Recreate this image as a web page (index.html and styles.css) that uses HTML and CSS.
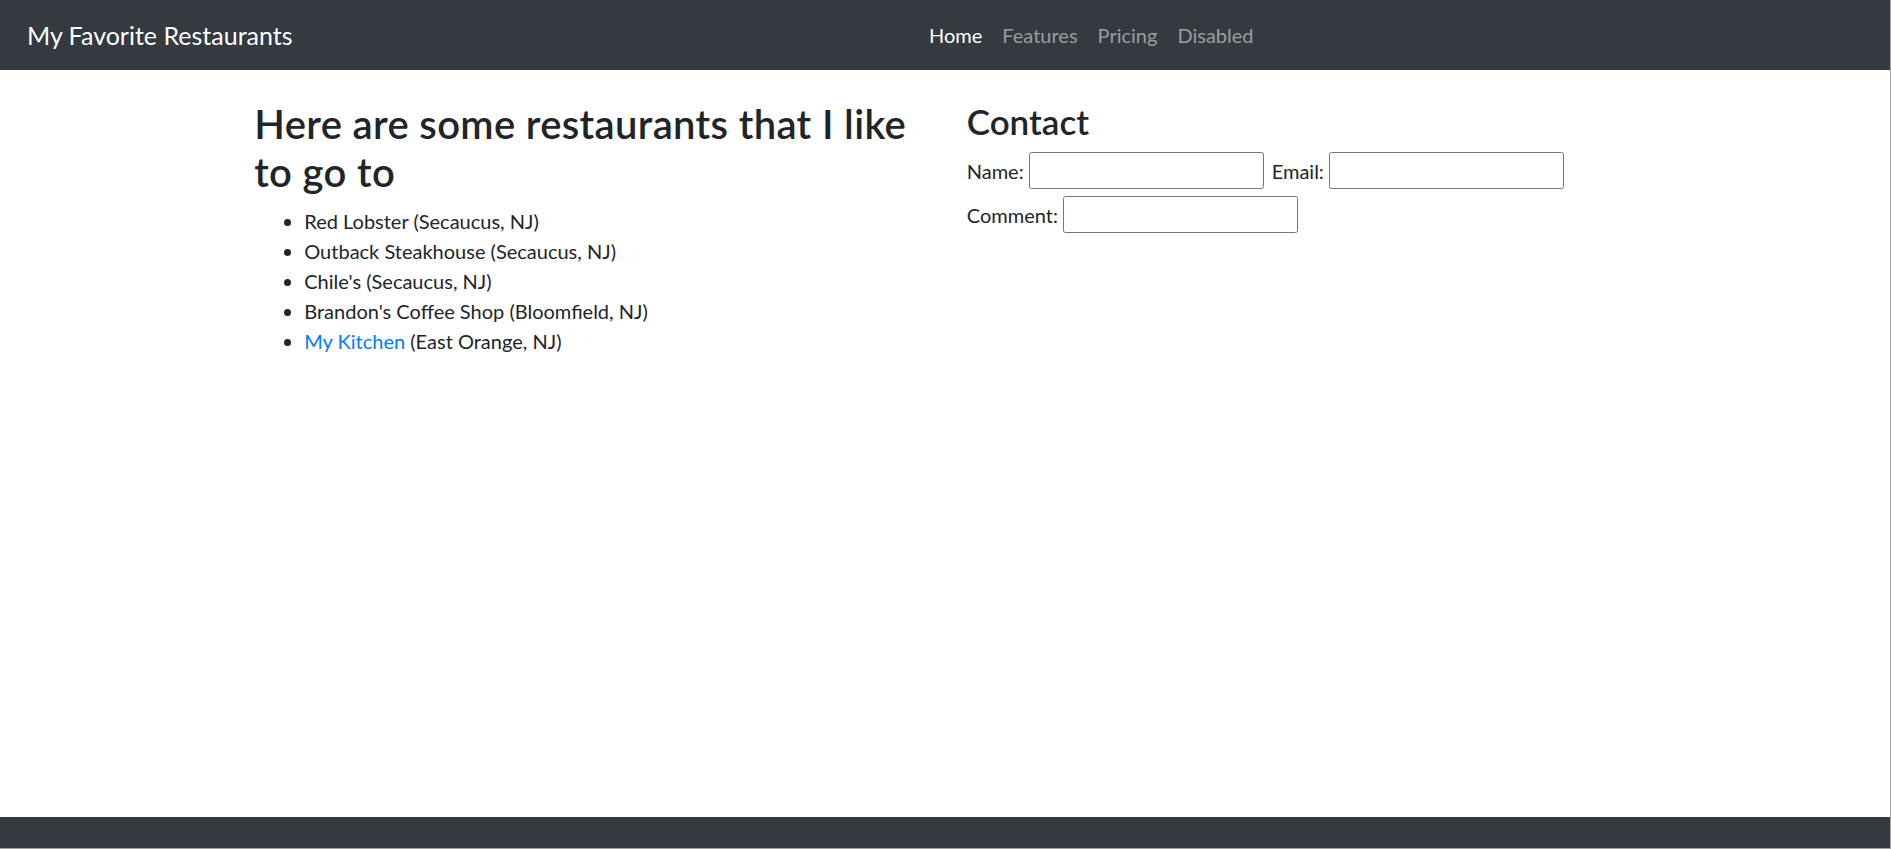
FILE: index.html
```html
<!DOCTYPE html>
<html lang="en">
<head>
<meta charset="utf-8">
<title>My Favorite Restaurants</title>
<link rel="stylesheet" href="styles.css">
</head>
<body>
<div class="page">
  <nav class="navbar">
    <a class="brand" href="#">My Favorite Restaurants</a>
    <div class="nav-collapse">
      <ul class="nav">
        <li><a class="nav-link active" href="#">Home</a></li>
        <li><a class="nav-link" href="#">Features</a></li>
        <li><a class="nav-link" href="#">Pricing</a></li>
        <li><a class="nav-link" href="#">Disabled</a></li>
      </ul>
    </div>
  </nav>
  <main class="container">
    <div class="row">
      <section class="col">
        <h2 class="title">Here are some restaurants that I like to go to</h2>
        <ul class="list">
          <li>Red Lobster (Secaucus, NJ)</li>
          <li>Outback Steakhouse (Secaucus, NJ)</li>
          <li>Chile's (Secaucus, NJ)</li>
          <li>Brandon's Coffee Shop (Bloomfield, NJ)</li>
          <li><a class="link" href="#">My Kitchen</a> (East Orange, NJ)</li>
        </ul>
      </section>
      <section class="col">
        <h3 class="subtitle">Contact</h3>
        <form class="form">
          <div class="form-row">
            <label class="label" for="name">Name:</label>
            <input class="input" type="text" id="name">
            <label class="label" for="email">Email:</label>
            <input class="input" type="text" id="email">
          </div>
          <div class="form-row">
            <label class="label" for="comment">Comment:</label>
            <input class="input" type="text" id="comment">
          </div>
        </form>
      </section>
    </div>
  </main>
  <footer class="footer"></footer>
</div>
</body>
</html>
```

FILE: styles.css
```css
* { box-sizing: border-box; }

html, body {
  margin: 0;
  padding: 0;
}

body {
  font-family: Lato, "Open Sans", "Liberation Sans", sans-serif;
  font-size: 20px;
  line-height: 30px;
  color: #212529;
  background: #fff;
}

.page {
  min-height: 849px;
  display: flex;
  flex-direction: column;
  border-right: 1px solid #a0a0a0;
  border-bottom: 1px solid #a0a0a0;
}

.navbar {
  height: 70px;
  background: #343a40;
  display: flex;
  align-items: center;
  padding: 0 20px 0 27px;
  flex-shrink: 0;
}

.brand {
  color: #fff;
  text-decoration: none;
  font-size: 25px;
  line-height: 37px;
  white-space: nowrap;
  margin-right: 20px;
}

.nav-collapse {
  flex: 1;
  display: flex;
  justify-content: center;
}

.nav {
  display: flex;
  list-style: none;
  margin: 0;
  padding: 0;
}

.nav-link {
  display: block;
  padding: 0 10px;
  color: rgba(255, 255, 255, 0.5);
  text-decoration: none;
  font-size: 20px;
  line-height: 30px;
}

.nav-link.active {
  color: #fff;
}

.container {
  width: 1425px;
  margin: 30px auto 0;
  padding: 0 15.75px 0 21.75px;
}

.row {
  display: grid;
  grid-template-columns: 1fr 1fr;
  column-gap: 37.5px;
}

.title {
  margin: 0 0 10px;
  font-size: 40px;
  line-height: 48px;
  font-weight: 600;
  letter-spacing: 0.35px;
}

.subtitle {
  margin: 0 0 10px;
  font-size: 35px;
  line-height: 42px;
  font-weight: 600;
}

.list {
  margin: 0 0 20px;
  padding-left: 50px;
}

.link {
  color: #007bff;
  text-decoration: none;
}

.form {
  display: flex;
  flex-direction: column;
  gap: 7px;
}

.form-row {
  display: flex;
  align-items: center;
}

.label {
  margin-right: 5px;
}

.input {
  width: 235px;
  height: 37px;
  border: 1px solid #767676;
  border-radius: 2.5px;
  margin-right: 8px;
  padding: 1px 2px;
  font: inherit;
  font-size: 16px;
}

.footer {
  margin-top: auto;
  height: 31px;
  background: #343a40;
}
```
